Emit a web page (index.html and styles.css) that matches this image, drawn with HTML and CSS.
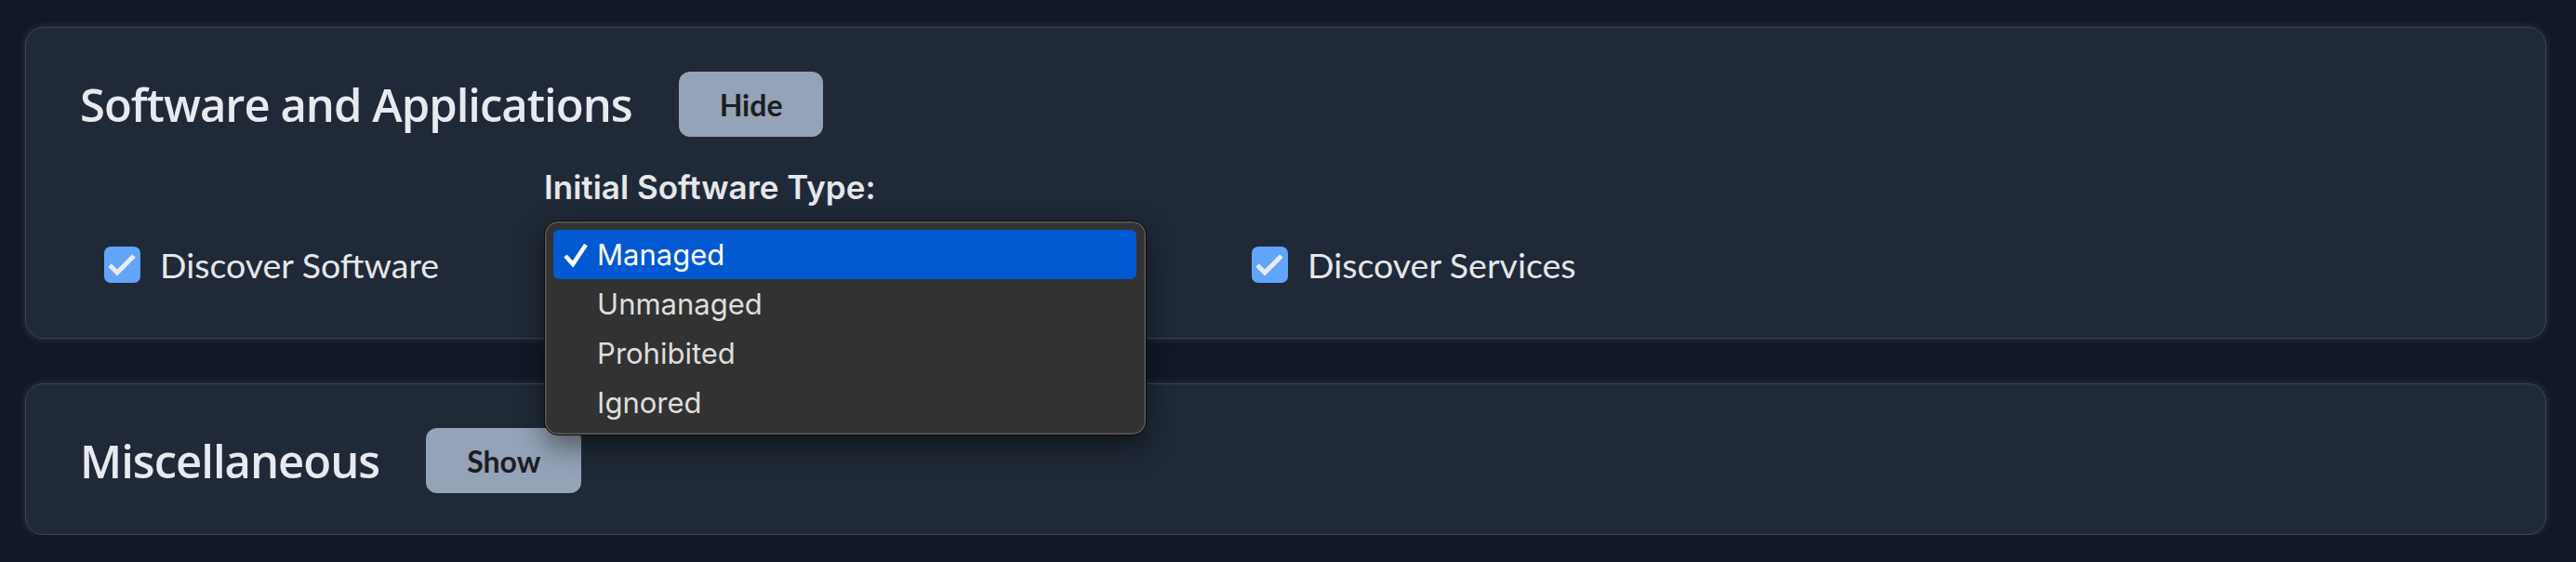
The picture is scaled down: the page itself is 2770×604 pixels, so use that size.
FILE: index.html
```html
<!DOCTYPE html>
<html lang="en">
<head>
    <meta charset="UTF-8">
    <meta name="viewport" content="width=device-width, initial-scale=1.0">
    <title>Discovery Settings</title>
    <link rel="stylesheet" href="styles.css">
</head>
<body>
    <main class="settings">
        <!-- Software section (expanded, type menu open) -->
        <section class="card">
            <div class="card-head">
                <h2>Software and Applications</h2>
                <button class="toggle">Hide</button>
            </div>
            <div class="options">
                <label class="check">
                    <span class="box">
                        <svg viewBox="0 0 39 39" width="39" height="39"><polyline points="6,20 14,28 32,10" fill="none" stroke="#e8eaef" stroke-width="5"/></svg>
                    </span>
                    Discover Software
                </label>
                <div class="field">
                    <div class="field-label">Initial Software Type:</div>
                    <div class="select-wrap">
                        <ul class="menu">
                            <li class="selected">
                                <svg class="tick" viewBox="0 0 26 25" width="26" height="25"><polyline points="2,13 10,22 24,1" fill="none" stroke="#fff" stroke-width="4.5"/></svg>
                                Managed
                            </li>
                            <li>Unmanaged</li>
                            <li>Prohibited</li>
                            <li>Ignored</li>
                        </ul>
                    </div>
                </div>
                <label class="check">
                    <span class="box">
                        <svg viewBox="0 0 39 39" width="39" height="39"><polyline points="6,20 14,28 32,10" fill="none" stroke="#e8eaef" stroke-width="5"/></svg>
                    </span>
                    Discover Services
                </label>
            </div>
        </section>

        <!-- Misc section (collapsed) -->
        <section class="card card-collapsed">
            <div class="card-head">
                <h2>Miscellaneous</h2>
                <button class="toggle">Show</button>
            </div>
        </section>
    </main>
</body>
</html>
```

FILE: styles.css
```css
/* Global styles */
body {
    margin: 0;
    background-color: #111827;
    font-family: "Lato", "Open Sans", sans-serif;
    color: #e5e7eb;
}

.settings {
    padding: 29px 32px 0 27px;
    display: flex;
    flex-direction: column;
    gap: 48px;
}

/* Cards */
.card {
    position: relative;
    background-color: #1f2937;
    border: 1px solid #3c4453;
    border-radius: 20px;
    box-shadow: 0 0 7px 1px rgba(90, 100, 120, 0.35);
    padding: 47px 58px 40px 58px;
}

.card-collapsed {
    padding-bottom: 44px;
}

.card-head {
    display: flex;
    align-items: center;
    gap: 50px;
}

.card-head h2 {
    margin: 0;
    font-family: "Open Sans", sans-serif;
    font-weight: 600;
    font-size: 49px;
    letter-spacing: -1px;
    line-height: 1;
    color: #e8eaef;
}

.toggle {
    height: 70px;
    padding: 0 44px;
    border: none;
    border-radius: 12px;
    background-color: #94a3b8;
    color: #1c1d20;
    font-family: "Lato", sans-serif;
    font-weight: 700;
    font-size: 32px;
    cursor: pointer;
}

/* Options row */
.options {
    display: flex;
    align-items: flex-end;
    gap: 113px;
    margin-top: 32px;
    padding-left: 26px;
}

.check {
    display: flex;
    align-items: center;
    gap: 21px;
    height: 44px;
    padding-bottom: 17px;
    font-size: 37.5px;
    color: #e5e7eb;
}

.box {
    display: block;
    width: 39px;
    height: 39px;
    border-radius: 7px;
    background-color: #60a5fa;
}

.box svg {
    display: block;
}

.field-label {
    font-family: "Inter", sans-serif;
    font-size: 35px;
    line-height: 44px;
    font-weight: 600;
    letter-spacing: 0;
    color: #e5e7eb;
}

.select-wrap {
    position: relative;
    width: 648px;
    height: 86px;
    margin-top: 14px;
}

/* Open native-style dropdown */
.menu {
    position: absolute;
    top: 0;
    left: 0;
    z-index: 10;
    width: 648px;
    box-sizing: border-box;
    margin: 0;
    padding: 9px 10px 8px 9px;
    list-style: none;
    background-color: #323232;
    border: 1px solid #0d0d0d;
    border-radius: 15px;
    box-shadow: inset 0 0 0 1.5px #5b5b5b, 0 12px 30px rgba(0, 0, 0, 0.45);
    font-family: "Inter", sans-serif;
    font-size: 31px;
}

.menu li {
    position: relative;
    height: 53px;
    line-height: 53px;
    padding-left: 47px;
    border-radius: 6px;
    color: #dedede;
}

.menu li.selected {
    background-color: #0059d1;
    color: #fff;
}

.tick {
    position: absolute;
    left: 11px;
    top: 15px;
}
```
